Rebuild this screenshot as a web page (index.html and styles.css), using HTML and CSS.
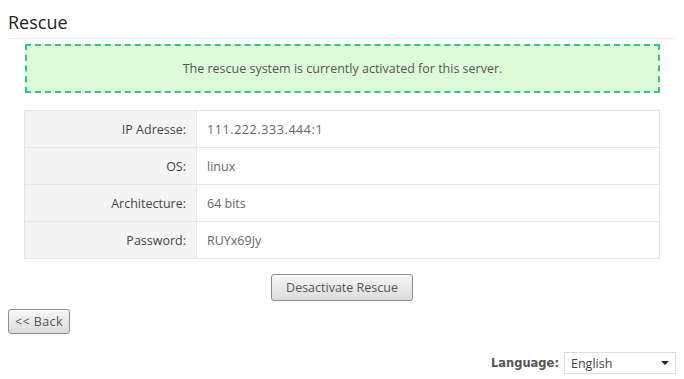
FILE: index.html
```html
<!DOCTYPE html>
<html lang="en">

<head>
    <meta charset="UTF-8">
    <title>Rescue</title>
    <link rel="stylesheet" href="styles.css">
</head>

<body>
    <h1 class="page-title">Rescue</h1>
    <div class="content">
        <div class="notice">The rescue system is currently activated for this server.</div>
        <table class="details">
            <tr>
                <td class="label">IP Adresse:</td>
                <td class="value-ip">111.222.333.444:1</td>
            </tr>
            <tr>
                <td class="label">OS:</td>
                <td>linux</td>
            </tr>
            <tr>
                <td class="label">Architecture:</td>
                <td>64 bits</td>
            </tr>
            <tr>
                <td class="label">Password:</td>
                <td>RUYx69Jy</td>
            </tr>
        </table>
        <div class="actions">
            <button class="btn">Desactivate Rescue</button>
        </div>
    </div>
    <div class="back-row">
        <button class="btn btn-back">&lt;&lt; Back</button>
    </div>
    <div class="footer">
        <label class="lang-label" for="lang">Language:</label>
        <div class="lang-select" id="lang">
            <span>English</span>
            <span class="caret"></span>
        </div>
    </div>
</body>

</html>
```

FILE: styles.css
```css
body {
    margin: 0;
    padding: 0 8px;
    background-color: #fff;
    color: #555;
    font-family: 'Open Sans', 'Noto Sans', sans-serif;
    font-size: 12.5px;
}

.page-title {
    margin: 0;
    padding: 12px 0 6px;
    font-size: 18px;
    font-weight: normal;
    color: #222;
    line-height: 20px;
    border-bottom: 1px dotted #e4e4e4;
}

.content {
    padding: 5px 16px 0 16px;
}

.notice {
    height: 45px;
    line-height: 45px;
    margin-left: 1px;
    text-align: center;
    background-color: #dcfcd9;
    /* dashed green border */
    border: 2px dashed #3fbf86;
    color: #555;
}

.details {
    width: 100%;
    border-collapse: collapse;
    margin-top: 17px;
    border: 1px solid #e6e6e6;
}

.details td {
    height: 36px;
    padding: 0 10px;
    border-bottom: 1px solid #e6e6e6;
    color: #666;
}

.details .label {
    width: 151px;
    text-align: right;
    background-color: #f4f4f4;
    color: #444;
    border-right: 1px solid #e6e6e6;
}

.details .value-ip {
    letter-spacing: 0.6px;
}

.actions {
    display: flex;
    justify-content: center;
    margin-top: 15px;
}

.btn {
    box-sizing: border-box;
    height: 27px;
    padding: 0 14px;
    font-family: 'Open Sans', 'Noto Sans', sans-serif;
    font-size: 12.5px;
    color: #555;
    border: 1px solid #8d8d8d;
    border-radius: 3px;
    background: linear-gradient(#f6f6f6, #dcdcdc);
    box-shadow: inset 0 1px 0 #fff;
}

.back-row {
    margin-top: 8px;
}

.btn-back {
    height: 25px;
    padding: 0 6px;
    letter-spacing: 0.4px;
}

.footer {
    display: flex;
    justify-content: flex-end;
    align-items: center;
    gap: 5px;
    margin-top: 18px;
}

.lang-label {
    font-family: 'DejaVu Sans', Verdana, sans-serif;
    font-weight: bold;
    font-size: 11.5px;
    color: #555;
}

.lang-select {
    display: flex;
    align-items: center;
    justify-content: space-between;
    width: 112px;
    height: 22px;
    box-sizing: border-box;
    padding: 0 6px;
    border: 1px solid #dcdcdc;
    color: #444;
}

.caret {
    width: 0;
    height: 0;
    border-left: 4px solid transparent;
    border-right: 4px solid transparent;
    border-top: 4px solid #222;
}
```
